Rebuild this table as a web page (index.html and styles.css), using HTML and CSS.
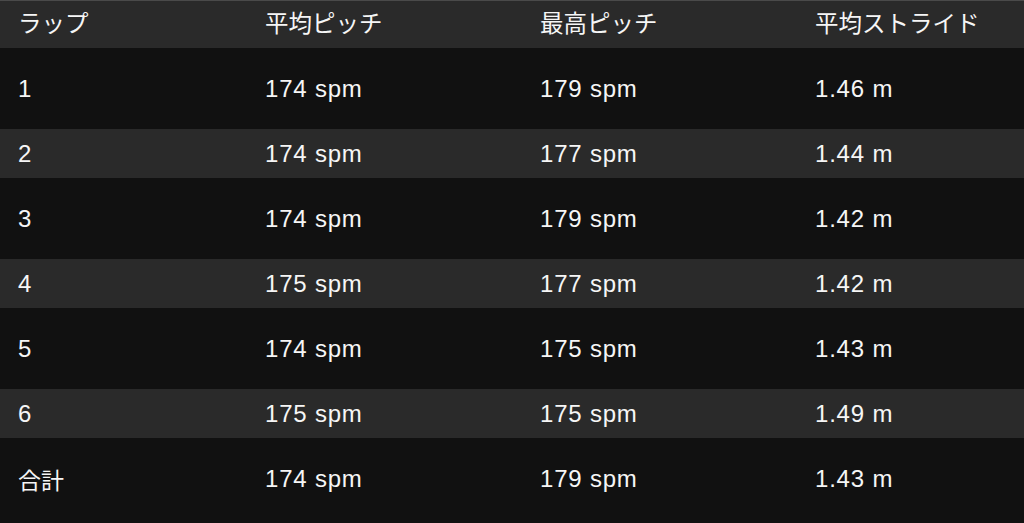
FILE: index.html
```html
<!DOCTYPE html>
<html lang="ja">
<head>
<meta charset="utf-8">
<link rel="stylesheet" href="styles.css">
</head>
<body>
<div class="table">
  <div class="row head"><div>ラップ</div><div>平均ピッチ</div><div>最高ピッチ</div><div>平均ストライド</div></div>
  <div class="row tall"><div>1</div><div>174 spm</div><div>179 spm</div><div>1.46 m</div></div>
  <div class="row band"><div>2</div><div>174 spm</div><div>177 spm</div><div>1.44 m</div></div>
  <div class="row tall"><div>3</div><div>174 spm</div><div>179 spm</div><div>1.42 m</div></div>
  <div class="row band"><div>4</div><div>175 spm</div><div>177 spm</div><div>1.42 m</div></div>
  <div class="row tall"><div>5</div><div>174 spm</div><div>175 spm</div><div>1.43 m</div></div>
  <div class="row band"><div>6</div><div>175 spm</div><div>175 spm</div><div>1.49 m</div></div>
  <div class="row tall"><div class="jp">合計</div><div>174 spm</div><div>179 spm</div><div>1.43 m</div></div>
</div>
</body>
</html>
```
FILE: styles.css
```css
html, body {
  margin: 0;
  padding: 0;
  background: #111111;
  overflow: hidden;
}
.table {
  width: 1024px;
  font-family: "Liberation Sans", "Noto Sans CJK JP", sans-serif;
  font-size: 24px;
  letter-spacing: 0.8px;
  color: #f6f6f6;
}
.row {
  display: grid;
  grid-template-columns: 247px 275px 275px 1fr;
  align-items: center;
  padding-left: 18px;
  box-sizing: border-box;
}
.head {
  height: 48px;
  background: #2a2a2a;
  border-top: 1px solid #4a4a4a;
  padding-bottom: 5px;
  font-size: 23.5px;
  letter-spacing: 0;
}
.jp {
  font-size: 23px;
  letter-spacing: 0;
}
.tall {
  height: 81px;
  background: #111111;
}
.band {
  height: 49px;
  background: #2a2a2a;
}
```
